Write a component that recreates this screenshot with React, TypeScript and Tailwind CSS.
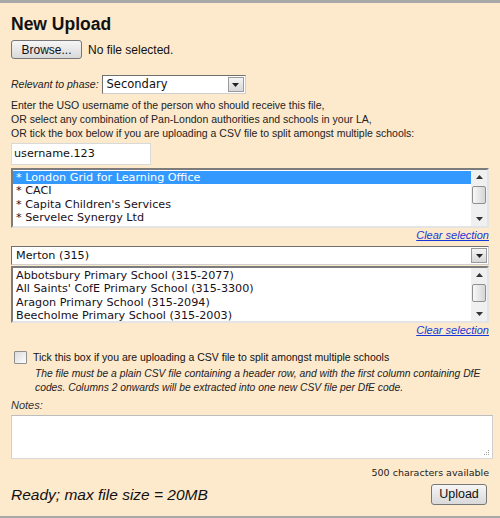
import { useState } from 'react';

const arial = "font-['Liberation_Sans',Arial,sans-serif]";
const verdana = "font-['DejaVu_Sans',Verdana,sans-serif]";

const agencies = [
  '* London Grid for Learning Office',
  '* CACI',
  "* Capita Children's Services",
  '* Servelec Synergy Ltd',
];

const schools = [
  'Abbotsbury Primary School (315-2077)',
  "All Saints' CofE Primary School (315-3300)",
  'Aragon Primary School (315-2094)',
  'Beecholme Primary School (315-2003)',
];

function DropArrow() {
  return (
    <div className="flex h-full w-[16px] items-center justify-center border border-[#9a9a9a] bg-gradient-to-b from-[#f4f4f4] to-[#d8d8d8]">
      <svg width="7" height="4" viewBox="0 0 7 4">
        <path d="M0 0h7L3.5 4z" fill="#222" />
      </svg>
    </div>
  );
}

function Scrollbar() {
  return (
    <div className="flex w-[16px] flex-col items-center bg-[#f0f0f0] py-[2px]">
      <svg width="7" height="10" viewBox="0 0 7 10">
        <path d="M0 7h7L3.5 3z" fill="#333" />
      </svg>
      <div className="mt-[4px] h-[18px] w-[14px] rounded-[2px] border border-[#8f8f8f] bg-gradient-to-r from-[#f8f8f8] to-[#d6d6d6]" />
      <div className="flex-1" />
      <svg width="7" height="10" viewBox="0 0 7 10">
        <path d="M0 3h7L3.5 7z" fill="#333" />
      </svg>
    </div>
  );
}

function ListBox({ items, selected, height }: { items: string[]; selected?: number; height: string }) {
  return (
    <div className={`flex ${height} overflow-hidden border-2 border-t-[#7c7c7c] border-l-[#7c7c7c] border-r-[#e4e4e4] border-b-[#e4e4e4] bg-white`}>
      <div className={`flex-1 pt-px ${verdana} text-[11.2px] leading-[13.3px] text-[#1a1020]`}>
        {items.map((item, i) => (
          <div
            key={item}
            className={`pl-[3px] ${i === selected ? 'bg-[#3399ff] text-white' : ''}`}
          >
            {item}
          </div>
        ))}
      </div>
      <Scrollbar />
    </div>
  );
}

function ClearLink() {
  return (
    <div className="flex justify-end">
      <a href="#" className={`${arial} text-[11px] italic leading-[15px] text-[#1638d8] underline`}>
        Clear selection
      </a>
    </div>
  );
}

export default function App() {
  const [notes, setNotes] = useState('');
  const [split, setSplit] = useState(false);

  return (
    <div className={`h-[518px] w-[500px] overflow-hidden border-t-[3px] border-b-[2px] border-[#a8a8a8] bg-[#fde9cc] text-[#1a1a1a] ${arial}`}>
      <div className="px-[11px] pt-[11px]">
        <h1 className="text-[17.5px] font-bold leading-[20px] text-[#111]">New Upload</h1>

        <div className="mt-[6px] flex items-center gap-[6px]">
          <button className="h-[19px] w-[71px] rounded-[3px] border border-[#777] bg-gradient-to-b from-[#f6f6f6] to-[#d9d9d9] text-[12px] leading-none text-[#111]">
            Browse...
          </button>
          <span className="text-[12px] text-[#111]">No file selected.</span>
        </div>

        <div className="mt-[16px] flex items-center gap-[3px]">
          <span className="text-[10.5px] italic text-[#222]">Relevant to phase:</span>
          <div className="flex h-[19px] w-[144px] border border-t-[#6f6f6f] border-l-[#6f6f6f] border-r-[#cfcfcf] border-b-[#cfcfcf] bg-white p-px">
            <span className={`flex-1 pl-[3px] ${verdana} text-[11.5px] leading-[15px] text-[#111]`}>Secondary</span>
            <DropArrow />
          </div>
        </div>

        <div className="mt-[4px] text-[10.5px] leading-[14px] text-[#222]">
          <p>Enter the USO username of the person who should receive this file,</p>
          <p>OR select any combination of Pan-London authorities and schools in your LA,</p>
          <p>OR tick the box below if you are uploading a CSV file to split amongst multiple schools:</p>
        </div>

        <div className={`mt-[3px] h-[22px] w-[140px] border border-[#d9d9d9] bg-white pl-[2px] ${verdana} text-[11.2px] leading-[20px] text-[#111]`}>
          username.123
        </div>

        <div className="mt-[3px]">
          <ListBox items={agencies} selected={0} height="h-[60px]" />
        </div>
        <ClearLink />

        <div className="mt-[3px] flex h-[19px] border border-t-[#6f6f6f] border-l-[#6f6f6f] border-r-[#cfcfcf] border-b-[#cfcfcf] bg-white p-px">
          <span className={`flex-1 pl-[3px] ${verdana} text-[11.2px] leading-[15px] text-[#111]`}>Merton (315)</span>
          <DropArrow />
        </div>
        <div className="mt-px">
          <ListBox items={schools} height="h-[57px]" />
        </div>
        <ClearLink />

        <label className="mt-[12px] flex items-start gap-[6px] pl-[3px]">
          <input
            type="checkbox"
            checked={split}
            onChange={(e) => setSplit(e.target.checked)}
            className="mt-px h-[13px] w-[13px] appearance-none rounded-[1px] border border-[#8e8f8f] bg-gradient-to-br from-[#dcdcdc] to-[#fdfdfd]"
          />
          <span className="text-[10.5px] leading-[15px] text-[#111]">
            Tick this box if you are uploading a CSV file to split amongst multiple schools
          </span>
        </label>
        <p className="-mr-[8px] mt-[2px] pl-[24px] text-[10.3px] italic leading-[14px] text-[#222]">
          The file must be a plain CSV file containing a header row, and with the first column containing DfE
          codes. Columns 2 onwards will be extracted into one new CSV file per DfE code.
        </p>

        <div className="mt-[3px] text-[11px] italic leading-[14px] text-[#333]">Notes:</div>
        <div className="relative mt-[3px] w-[482px]">
          <textarea
            value={notes}
            onChange={(e) => setNotes(e.target.value)}
            className="block h-[44px] w-full resize-none border border-t-[#bdbdbd] border-l-[#d0d0d0] border-r-[#d0d0d0] border-b-[#d8d8d8] bg-white outline-none"
          />
          <svg className="absolute right-[3px] bottom-[3px]" width="7" height="7" viewBox="0 0 7 7">
            <g fill="#a0a0a0">
              <rect x="5" y="1" width="1" height="1" />
              <rect x="3" y="3" width="1" height="1" />
              <rect x="5" y="3" width="1" height="1" />
              <rect x="1" y="5" width="1" height="1" />
              <rect x="3" y="5" width="1" height="1" />
              <rect x="5" y="5" width="1" height="1" />
            </g>
          </svg>
        </div>

        <div className={`mt-[8px] text-right ${verdana} text-[9.5px] leading-[12px] text-[#222]`}>
          500 characters available
        </div>

        <div className="mt-[4px] flex items-center justify-between pr-[2px]">
          <span className="text-[15.5px] italic text-[#111]">Ready; max file size = 20MB</span>
          <button className="h-[21px] w-[56px] rounded-[3px] border border-[#777] bg-gradient-to-b from-[#f6f6f6] to-[#d9d9d9] text-[12.5px] leading-none text-[#111]">
            Upload
          </button>
        </div>
      </div>
    </div>
  );
}
